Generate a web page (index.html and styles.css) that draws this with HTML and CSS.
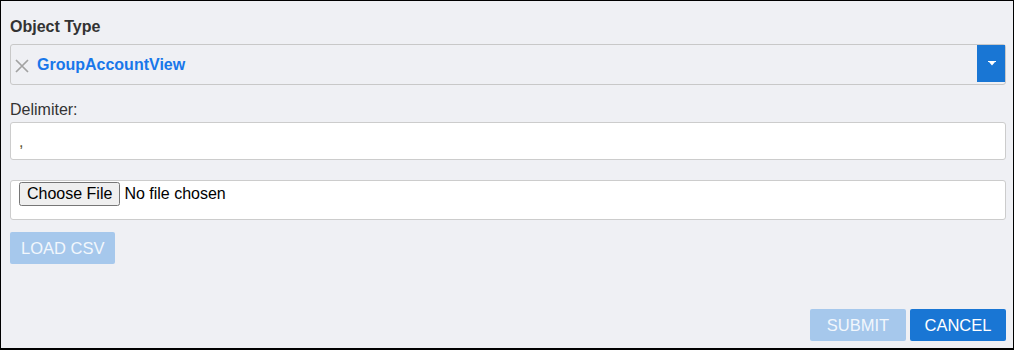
FILE: index.html
```html
<!DOCTYPE html>
<html>
<head>
<meta charset="utf-8">
<link rel="stylesheet" href="styles.css">
</head>
<body>
<div class="frame">
  <div class="label-bold">Object Type</div>
  <div class="select">
    <span class="clear">
      <svg width="14" height="14" viewBox="0 0 14 14"><path d="M1 1L13 13M13 1L1 13" stroke="#a2a2a2" stroke-width="1.7" fill="none"/></svg>
    </span>
    <span class="value">GroupAccountView</span>
    <span class="drop">
      <svg width="8" height="5" viewBox="0 0 8 5"><path d="M0 0H8V1H7L4 4.5L1 1H0Z" fill="#fff"/></svg>
    </span>
  </div>
  <div class="label">Delimiter:</div>
  <div class="text-input">,</div>
  <div class="file-box"><input type="file" class="file"></div>
  <div class="row">
    <button class="btn btn-light">LOAD CSV</button>
  </div>
  <div class="footer">
    <button class="btn btn-light">SUBMIT</button>
    <button class="btn btn-primary">CANCEL</button>
  </div>
</div>
</body>
</html>
```
FILE: styles.css
```css
* { box-sizing: border-box; }
html, body { margin: 0; padding: 0; }
body {
  font-family: "Liberation Sans", Arial, sans-serif;
  background: #eff0f4;
}
.frame {
  width: 1014px;
  height: 350px;
  border: 1px solid #000;
  border-bottom-width: 2px;
  background: #eff0f4;
  padding: 17px 7px 7px 9px;
  display: flex;
  flex-direction: column;
}
.label-bold {
  font-size: 16px;
  line-height: 18px;
  font-weight: bold;
  color: #333;
}
.select {
  margin-top: 8px;
  height: 41px;
  border: 1px solid #c8c8c8;
  border-radius: 3px;
  display: flex;
  align-items: center;
}
.clear {
  width: 26px;
  display: flex;
  justify-content: flex-start;
  padding-left: 4px;
  padding-top: 2px;
}
.value {
  font-size: 16px;
  font-weight: bold;
  color: #1877ea;
  flex: 1;
}
.drop {
  align-self: stretch;
  width: 28px;
  margin-bottom: 2px;
  background: #1976d4;
  display: flex;
  align-items: center;
  justify-content: center;
  padding-left: 2px;
}
.label {
  margin-top: 16px;
  font-size: 16px;
  line-height: 18px;
  color: #333;
}
.text-input {
  margin-top: 3px;
  height: 38px;
  background: #fff;
  border: 1px solid #ccc;
  border-radius: 3px;
  font-size: 16px;
  line-height: 18px;
  padding: 10px 8px 0 8px;
  color: #5a5330;
}
.file-box {
  margin-top: 20px;
  height: 40px;
  background: #fff;
  border: 1px solid #ccc;
  border-radius: 3px;
  padding: 1px 8px 0 8px;
}
.file {
  font-family: "Liberation Sans", Arial, sans-serif;
  font-size: 16px;
  color: #000;
}
.row {
  margin-top: 12px;
  display: flex;
}
.btn {
  font-family: "Liberation Sans", Arial, sans-serif;
  font-size: 16.5px;
  height: 32px;
  min-width: 96px;
  padding: 0 11px;
  border: none;
  border-radius: 2px;
  color: #fff;
}
.btn-light {
  background: #a6c8ec;
  color: #f2f7fc;
}
.btn-primary {
  background: #1976d4;
}
.footer {
  margin-top: auto;
  display: flex;
  justify-content: flex-end;
  gap: 4px;
}
```
